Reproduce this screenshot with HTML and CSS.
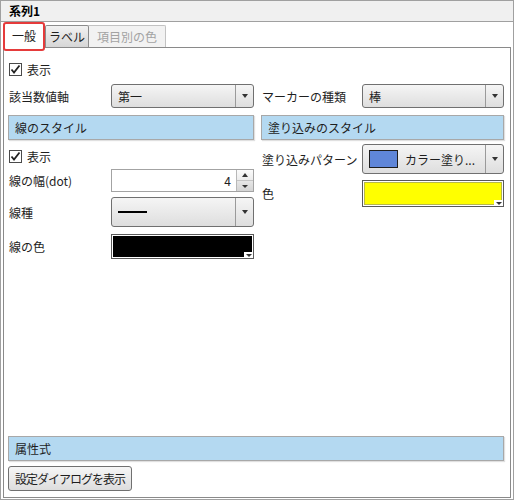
FILE: index.html
```html
<!DOCTYPE html>
<html lang="ja">
<head>
<meta charset="utf-8">
<link rel="stylesheet" href="styles.css">
</head>
<body>
<div class="window">
  <div class="title">系列1</div>
  <div class="tabs">
    <div class="tab selected">一般</div>
    <div class="tab normal">ラベル</div>
    <div class="tab disabled">項目別の色</div>
  </div>
  <div class="panel">
    <div class="chkrow top">
      <svg class="chk" width="13" height="13" viewBox="0 0 13 13"><rect x="0.5" y="0.5" width="12" height="12" fill="#fff" stroke="#4a4a4a"/><path d="M2.5 6.5 L5 9.5 L10.5 2.5" fill="none" stroke="#222" stroke-width="1.8"/></svg>
      <span>表示</span>
    </div>
    <div class="cols">
      <div class="col left">
        <div class="row h24">
          <div class="lbl">該当数値軸</div>
          <div class="combo"><div class="val">第一</div><div class="arrow"><i></i></div></div>
        </div>
        <div class="section">線のスタイル</div>
        <div class="chkrow sub">
          <svg class="chk" width="13" height="13" viewBox="0 0 13 13"><rect x="0.5" y="0.5" width="12" height="12" fill="#fff" stroke="#4a4a4a"/><path d="M2.5 6.5 L5 9.5 L10.5 2.5" fill="none" stroke="#222" stroke-width="1.8"/></svg>
          <span>表示</span>
        </div>
        <div class="row h23 mt6">
          <div class="lbl">線の幅(dot)</div>
          <div class="spin">
            <div class="num">4</div>
            <div class="btns"><div class="up"><i></i></div><div class="down"><i></i></div></div>
          </div>
        </div>
        <div class="row h30 mt5">
          <div class="lbl">線種</div>
          <div class="combo"><div class="val"><span class="linesample"></span></div><div class="arrow"><i></i></div></div>
        </div>
        <div class="row h25 mt7">
          <div class="lbl">線の色</div>
          <div class="colorbox"><div class="swatch black"></div><div class="notch"><i></i></div></div>
        </div>
      </div>
      <div class="col right">
        <div class="row h24">
          <div class="lbl">マーカーの種類</div>
          <div class="combo"><div class="val">棒</div><div class="arrow"><i></i></div></div>
        </div>
        <div class="section">塗り込みのスタイル</div>
        <div class="row h30 mt4">
          <div class="lbl">塗り込みパターン</div>
          <div class="combo"><div class="val"><span class="blue"></span>カラー塗り...</div><div class="arrow"><i></i></div></div>
        </div>
        <div class="row h27 mt6">
          <div class="lbl">色</div>
          <div class="colorbox"><div class="swatch yellow"></div><div class="notch"><i></i></div></div>
        </div>
      </div>
    </div>
    <div class="spacer"></div>
    <div class="section wide">属性式</div>
    <div class="button">設定ダイアログを表示</div>
  </div>
</div>
</body>
</html>
```
FILE: styles.css
```css
html, body {
  margin: 0;
  padding: 0;
  background: #fff;
}
body {
  font-family: "Noto Sans CJK JP", "Noto Sans", sans-serif;
  font-size: 12px;
  color: #1e1e1e;
}
.window {
  width: 514px;
  height: 500px;
  box-sizing: border-box;
  border: 1px solid #a0a0a0;
  display: flex;
  flex-direction: column;
  background: #fff;
}
.title {
  height: 20px;
  line-height: 20px;
  background: #f0f0f0;
  border-bottom: 1px solid #a0a0a0;
  padding-left: 8px;
  font-weight: bold;
  font-size: 12px;
  color: #000;
}
.tabs {
  height: 25px;
  display: flex;
  align-items: flex-end;
  padding-left: 2px;
  position: relative;
  z-index: 2;
}
.tab {
  box-sizing: border-box;
  text-align: center;
  font-size: 12px;
}
.tab.selected {
  width: 42px;
  height: 29px;
  margin-bottom: -4px;
  border: 2px solid #e53b3b;
  border-radius: 3px;
  background: #fff;
  line-height: 24px;
  position: relative;
  z-index: 3;
}
.tab.normal {
  width: 44px;
  height: 22px;
  border: 1px solid #8c8c8c;
  border-bottom: none;
  border-radius: 2px 2px 0 0;
  background: linear-gradient(#f2f2f2, #d6d6d6);
  line-height: 21px;
}
.tab.disabled {
  width: 77px;
  height: 22px;
  border: 1px solid #c2c2c2;
  border-left: none;
  border-bottom: none;
  border-radius: 0 2px 0 0;
  background: #f2f2f2;
  color: #a3a3a3;
  line-height: 21px;
}
.panel {
  flex: 1;
  margin: 0 2px 1px 2px;
  border: 1px solid #8a8a8a;
  padding: 0 6px 6px 4px;
  display: flex;
  flex-direction: column;
  min-height: 0;
}
.chkrow {
  display: flex;
  align-items: center;
  height: 15px;
  padding-left: 1px;
}
.chkrow.top {
  margin-top: 14px;
}
.chkrow.sub {
  margin-top: 9px;
  height: 14px;
}
.chk {
  flex: none;
  margin-right: 5px;
}
.cols {
  display: flex;
  gap: 7px;
  margin-top: 7px;
}
.col {
  display: flex;
  flex-direction: column;
}
.col.left { width: 246px; }
.col.right { width: 243px; }
.row {
  display: flex;
  align-items: center;
}
.h23 { height: 23px; }
.h24 { height: 24px; }
.h25 { height: 25px; }
.h27 { height: 27px; }
.h30 { height: 30px; }
.mt4 { margin-top: 4px; }
.mt5 { margin-top: 5px; }
.mt6 { margin-top: 6px; }
.mt7 { margin-top: 7px; }
.lbl {
  flex: none;
  padding-left: 1px;
  white-space: nowrap;
}
.left .lbl { width: 102px; }
.right .lbl { width: 100px; }
.combo, .spin, .colorbox {
  flex: 1;
  align-self: stretch;
  box-sizing: border-box;
  display: flex;
}
.combo {
  border: 1px solid #707070;
  border-radius: 3px;
  background: linear-gradient(#f5f5f5, #dedede);
}
.combo .val {
  flex: 1;
  display: flex;
  align-items: center;
  padding-left: 6px;
  white-space: nowrap;
}
.combo .arrow {
  width: 17px;
  border-left: 1px solid #9a9a9a;
  display: flex;
  align-items: center;
  justify-content: center;
}
.arrow i, .notch i, .btns i {
  display: block;
  width: 0;
  height: 0;
  border-left: 3.5px solid transparent;
  border-right: 3.5px solid transparent;
  border-top: 4px solid #333;
}
.btns .up i {
  border-top: none;
  border-bottom: 4px solid #333;
  border-left-width: 3px;
  border-right-width: 3px;
}
.btns .down i {
  border-top-width: 3px;
  border-left-width: 3px;
  border-right-width: 3px;
}
.linesample {
  display: block;
  width: 29px;
  height: 2px;
  background: #000;
}
.blue {
  display: block;
  width: 27px;
  height: 16px;
  background: #5f86d9;
  border: 1px solid #1e1e1e;
  margin-right: 7px;
}
.spin {
  border: 1px solid #a3a3a3;
  background: #fff;
}
.spin .num {
  flex: 1;
  text-align: right;
  padding-right: 5px;
  display: flex;
  align-items: center;
  justify-content: flex-end;
}
.spin .btns {
  width: 16px;
  border-left: 1px solid #b8b8b8;
  display: flex;
  flex-direction: column;
}
.btns > div {
  flex: 1;
  display: flex;
  align-items: center;
  justify-content: center;
}
.btns .up {
  background: linear-gradient(#fbfbfb, #ececec);
  border-bottom: 1px solid #c4c4c4;
}
.btns .down {
  background: linear-gradient(#e6e6e6, #d4d4d4);
}
.colorbox {
  border: 1px solid #5a5a5a;
  padding: 1px;
  background: #fff;
  position: relative;
}
.swatch {
  flex: 1;
  box-sizing: border-box;
}
.swatch.black {
  background: #000;
}
.swatch.yellow {
  background: #ffff00;
  border: 1px solid #b8b84a;
}
.notch {
  position: absolute;
  right: 0;
  bottom: 0;
  width: 9px;
  height: 6px;
  background: #fff;
  display: flex;
  align-items: center;
  justify-content: center;
}
.notch i {
  border-left-width: 3px;
  border-right-width: 3px;
  border-top-width: 3px;
}
.section {
  margin-top: 7px;
  height: 25px;
  box-sizing: border-box;
  border: 1px solid #a8a8a8;
  background: #b4d9f1;
  box-shadow: 1px 1px 1px rgba(0, 0, 0, 0.12);
  padding-left: 6px;
  display: flex;
  align-items: center;
  white-space: nowrap;
}
.section.wide {
  margin-top: 0;
}
.spacer {
  flex: 1;
}
.button {
  margin-top: 5px;
  width: 124px;
  height: 25px;
  box-sizing: border-box;
  border: 1px solid #707070;
  border-radius: 3px;
  background: linear-gradient(#f6f6f6, #dddddd);
  display: flex;
  align-items: center;
  justify-content: center;
  white-space: nowrap;
  letter-spacing: -1px;
}
```
